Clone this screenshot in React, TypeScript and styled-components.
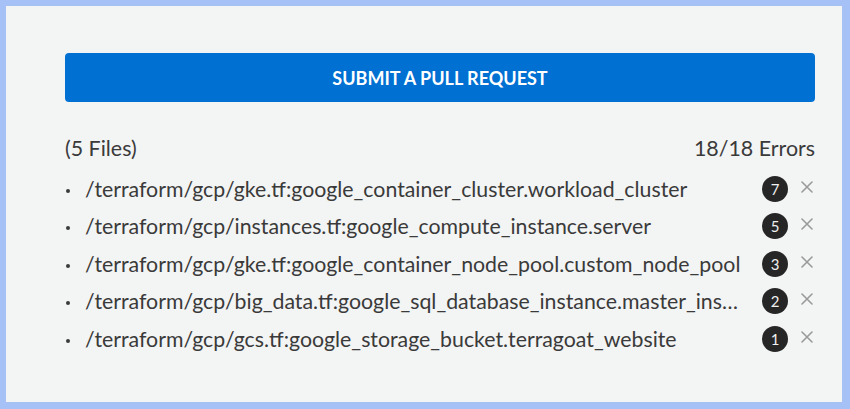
import React from "react";
import styled, { createGlobalStyle } from "styled-components";

interface ErrorFile {
  id: number;
  path: string;
  count: number;
}

const files: ErrorFile[] = [
  { id: 1, path: "/terraform/gcp/gke.tf:google_container_cluster.workload_cluster", count: 7 },
  { id: 2, path: "/terraform/gcp/instances.tf:google_compute_instance.server", count: 5 },
  { id: 3, path: "/terraform/gcp/gke.tf:google_container_node_pool.custom_node_pool", count: 3 },
  { id: 4, path: "/terraform/gcp/big_data.tf:google_sql_database_instance.master_instance", count: 2 },
  { id: 5, path: "/terraform/gcp/gcs.tf:google_storage_bucket.terragoat_website", count: 1 },
];

const GlobalStyle = createGlobalStyle`
  html, body {
    margin: 0;
    padding: 0;
    background: #f3f4f4;
  }
  body {
    font-family: Lato, "Liberation Sans", sans-serif;
  }
`;

const App = () => {
  const total = files.reduce((sum, f) => sum + f.count, 0);
  return (
    <>
      <GlobalStyle />
      <Frame>
        <SubmitButton>Submit a pull request</SubmitButton>
        <Summary>
          <span>({files.length} Files)</span>
          <span>
            {total}/{total} Errors
          </span>
        </Summary>
        <List>
          {files.map((file) => (
            <Row key={file.id}>
              <Bullet />
              <Path title={file.path}>{file.path}</Path>
              <Badge>{file.count}</Badge>
              <Remove aria-label='remove'>
                <svg width='12' height='12' viewBox='0 0 12 12'>
                  <path
                    d='M1 1L11 11M11 1L1 11'
                    stroke='#9a9a9a'
                    strokeWidth='1.6'
                    strokeLinecap='round'
                  />
                </svg>
              </Remove>
            </Row>
          ))}
        </List>
      </Frame>
    </>
  );
};

export default App;

const Frame = styled.div`
  box-sizing: border-box;
  width: 850px;
  height: 409px;
  border-style: solid;
  border-color: #a6c1f5;
  border-width: 6px 8px 7px 6px;
  background: #f3f4f4;
  padding: 47px 27px 0 59px;
  display: flex;
  flex-direction: column;
`;

const SubmitButton = styled.button`
  height: 49px;
  width: 100%;
  border: none;
  border-radius: 4px;
  background: #0070d2;
  color: #ffffff;
  font-family: Lato, "Liberation Sans", sans-serif;
  font-size: 18px;
  font-weight: 700;
  text-transform: uppercase;
  cursor: pointer;
`;

const Summary = styled.div`
  display: flex;
  justify-content: space-between;
  align-items: center;
  margin-top: 33px;
  font-size: 21.4px;
  color: #3a3a3a;
  line-height: 26px;
`;

const List = styled.ul`
  list-style: none;
  margin: 9px 0 0;
  padding: 0;
`;

const Row = styled.li`
  display: flex;
  align-items: center;
  height: 37.5px;
  font-size: 21.3px;
  color: #3a3a3a;
`;

const Bullet = styled.span`
  flex: none;
  width: 4px;
  height: 4px;
  border-radius: 50%;
  background: #3a3a3a;
  margin: 4px 15px 0 1px;
`;

const Path = styled.span`
  flex: 1;
  min-width: 0;
  white-space: nowrap;
  overflow: hidden;
  text-overflow: ellipsis;
  margin-right: 20px;
`;

const Badge = styled.span`
  flex: none;
  width: 26px;
  height: 26px;
  border-radius: 50%;
  background: #262626;
  color: #f0f0f0;
  font-size: 15px;
  font-weight: 400;
  display: flex;
  align-items: center;
  justify-content: center;
`;

const Remove = styled.button`
  flex: none;
  border: none;
  background: none;
  padding: 0;
  margin: -4px 2px 0 13px;
  width: 12px;
  height: 12px;
  display: flex;
  cursor: pointer;
`;
